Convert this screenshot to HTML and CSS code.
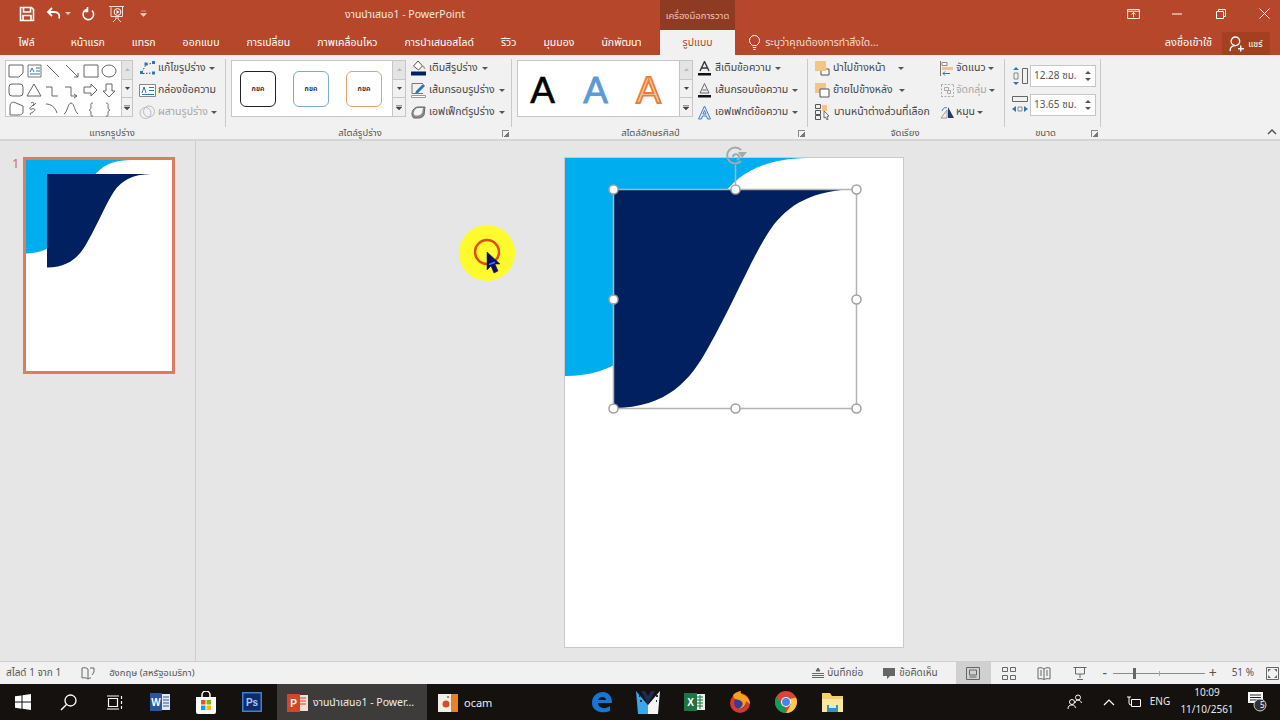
FILE: index.html
```html
<!DOCTYPE html>
<html lang="th">
<head>
<meta charset="utf-8">
<title>งานนำเสนอ1 - PowerPoint</title>
<link rel="stylesheet" href="styles.css">
</head>
<body>
<div class="app">
  <header class="titlebar">
    <div class="qat">
      <svg class="q-save" width="16" height="16" viewBox="0 0 16 16"><path d="M1.500 1.500h11l2 2v11h-13z M4.500 1.500v4.500h7v-4.500 M4 14.500v-5h8v5" fill="none" stroke="#fff" stroke-width="1.600"/></svg>
      <svg class="q-undo" width="16" height="14" viewBox="0 0 16 14"><path d="M6 1L2 5l4 4M2 5h7a4.500 4.500 0 0 1 4 6.500" fill="none" stroke="#fff" stroke-width="1.800"/></svg>
      <svg class="q-drop" width="6" height="4" viewBox="0 0 6 4"><path d="M0 0h6L3 3z" fill="#f1d0c6"/></svg>
      <svg class="q-redo" width="14" height="14" viewBox="0 0 14 14"><path d="M5 2.200A5.300 5.300 0 1 0 10 3.500M5.500 0v4.500H1" fill="none" stroke="#fff" stroke-width="1.600" transform="translate(1 0)"/></svg>
      <svg class="q-show" width="18" height="18" viewBox="0 0 18 18"><path d="M1 1.500h15M3 2v9.500h11.500V2M8 12v2l-3 3M10 12v2l3 3" fill="none" stroke="#f6ded6" stroke-width="1"/><circle cx="9.500" cy="7" r="3.400" fill="none" stroke="#fff"/><path d="M8.500 5l3 2-3 2z" fill="#fff"/></svg>
      <svg class="q-cust" width="7" height="7" viewBox="0 0 7 7"><path d="M1 1h5M.5 3.500h6L3.500 6.500z" fill="#f1d0c6" stroke="#f1d0c6" stroke-width=".6"/></svg>
    </div>
    <div class="doc-title">งานนำเสนอ1 - PowerPoint</div>
    <div class="context-tab">เครื่องมือการวาด</div>
    <div class="win-ctl">
      <div class="win-btn"><svg width="13" height="10" viewBox="0 0 14 11"><path d="M.5.500h13v10H.5zM.5 2.500h13M7 9V4M4.800 6L7 3.800 9.200 6" fill="none" stroke="#fff"/></svg></div>
      <div class="win-btn"><svg width="10" height="2" viewBox="0 0 10 2"><path d="M0 1h10" stroke="#fff"/></svg></div>
      <div class="win-btn"><svg width="10" height="10" viewBox="0 0 10 10"><path d="M.5 2.500h7v7h-7zM2.500 2.500v-2h7v7h-2" fill="none" stroke="#fff"/></svg></div>
      <div class="win-btn"><svg width="11" height="11" viewBox="0 0 11 11"><path d="M.5.500l10 10M10.500.500l-10 10" stroke="#fff"/></svg></div>
    </div>
  </header>

  <nav class="tabs">
    <span class="tab tab-file">ไฟล์</span>
    <span class="tab">หน้าแรก</span>
    <span class="tab">แทรก</span>
    <span class="tab">ออกแบบ</span>
    <span class="tab">การเปลี่ยน</span>
    <span class="tab">ภาพเคลื่อนไหว</span>
    <span class="tab">การนำเสนอสไลด์</span>
    <span class="tab">รีวิว</span>
    <span class="tab">มุมมอง</span>
    <span class="tab">นักพัฒนา</span>
    <span class="tab tab-active">รูปแบบ</span>
    <span class="tell">
      <svg width="11" height="15" viewBox="0 0 11 15"><path d="M3.500 10.500C1 8.500.5 7 .5 5.500a5 5 0 0 1 10 0c0 1.500-.5 3-3 5zM3.800 12.500h3.400M4.500 14.500h2" fill="none" stroke="#fff"/></svg>
      ระบุว่าคุณต้องการทำสิ่งใด...
    </span>
    <span class="signin">ลงชื่อเข้าใช้</span>
    <span class="share">
      <svg width="16" height="16" viewBox="0 0 15 15"><circle cx="6" cy="5" r="4" fill="none" stroke="#fff" stroke-width="1.300"/><path d="M1 14c0-3 2-5 5-5M11 9v5.500M8.500 12h5.500" fill="none" stroke="#fff" stroke-width="1.300"/></svg>
      แชร์
    </span>
  </nav>

  <section class="ribbon">
    <div class="group g-insert">
      <div class="group-body">
        <div class="gallery gal-shapes">
          <svg width="115" height="56" viewBox="0 0 115 56" fill="none" stroke="#666" stroke-width="1">
            <path d="M3 4h14v8l-4 4H3z"/>
            <path d="M22 4h13v12H22z" stroke="#777"/><path d="M24 11l2-4 2 4M30 7h4M30 10h4M24 13h10" stroke="#2e75b6"/>
            <path d="M41 4l12 12"/><path d="M60 4l12 12M72 12v4h-4"/>
            <path d="M78 4h14v12H78z"/><ellipse cx="103" cy="10" rx="7" ry="6"/>
            <rect x="3" y="23" width="14" height="12" rx="3"/>
            <path d="M28 23l7 12H21z"/>
            <path d="M40 26h6v9h6"/><path d="M59 26h6v9h6M68 33l3 2-3 2"/>
            <path d="M78 26h7v-3l6 6-6 6v-3h-7z"/>
            <path d="M100 23h6v7h3l-6 6-6-6h3z"/>
            <path d="M4 45c0-3 3-5 6-3l7 3v6c0 2-2 3-4 3H4z"/>
            <path d="M25 42c3-2 4 1 1 3s-3 4 0 3 4 1 1 3-4 1-2 3M30 42l-3 3"/>
            <path d="M40 43c5 0 9 3 11 9"/>
            <path d="M58 53c3-1 4-11 7-11s4 9 7 11"/>
            <path d="M87 42c-3 0-2 2-2 4s-1 3-2 3c1 0 2 1 2 3s-1 3 2 3"/>
            <path d="M100 42c3 0 2 2 2 4s1 3 2 3c-1 0-2 1-2 3s1 3-2 3"/>
          </svg>
          <div class="scroller">
            <span class="sc sc-dis"><svg width="5" height="3" viewBox="0 0 5 3"><path d="M0 3l2.500-3L5 3z" fill="#bbb"/></svg></span>
            <span class="sc"><svg width="5" height="3" viewBox="0 0 5 3"><path d="M0 0l2.500 3L5 0z" fill="#444"/></svg></span>
            <span class="sc"><svg width="6" height="5" viewBox="0 0 6 5"><path d="M0 .500h6M0 2h6L3 5z" fill="#444" stroke="#444" stroke-width=".5"/></svg></span>
          </div>
        </div>
        <div class="cmds cmds-insert">
          <div class="cmd"><svg width="17" height="15" viewBox="0 0 17 15"><path d="M3 11L7 3.500 14.500 2M4 12.500l10.500-.5" fill="none" stroke="#444" stroke-dasharray="1.500 1.500"/><path d="M1 10h3v3H1zM5.500 1.500h3v3h-3zM13 0h3v3h-3zM13 10.500h3v3h-3z" fill="#2e75b6"/></svg><span>แก้ไขรูปร่าง</span><i class="caret"></i></div>
          <div class="cmd"><svg width="17" height="15" viewBox="0 0 17 15"><path d="M.5 1.500h16v12H.5z" fill="#fff" stroke="#888"/><path d="M3 10l2-6 2 6M10 4.500h5M10 7.500h5M3 11.500h12" fill="none" stroke="#2e75b6"/></svg><span>กล่องข้อความ</span></div>
          <div class="cmd cmd-dis"><svg width="17" height="15" viewBox="0 0 17 15" fill="none" stroke="#bbb"><circle cx="6.500" cy="8" r="5.500"/><circle cx="10" cy="6.500" r="5.500"/></svg><span>ผสานรูปร่าง</span><i class="caret"></i></div>
        </div>
      </div>
      <div class="group-label">แทรกรูปร่าง</div>
    </div>

    <div class="group g-style">
      <div class="group-body">
        <div class="gallery gal-style">
          <div class="swatches">
            <div class="swatch sw-black">กขค</div>
            <div class="swatch sw-blue">กขค</div>
            <div class="swatch sw-orange">กขค</div>
          </div>
          <div class="scroller">
            <span class="sc sc-dis"><svg width="5" height="3" viewBox="0 0 5 3"><path d="M0 3l2.500-3L5 3z" fill="#bbb"/></svg></span>
            <span class="sc"><svg width="5" height="3" viewBox="0 0 5 3"><path d="M0 0l2.500 3L5 0z" fill="#444"/></svg></span>
            <span class="sc"><svg width="6" height="5" viewBox="0 0 6 5"><path d="M0 .500h6M0 2h6L3 5z" fill="#444" stroke="#444" stroke-width=".5"/></svg></span>
          </div>
        </div>
        <div class="cmds cmds-style">
          <div class="cmd"><svg width="15" height="15" viewBox="0 0 15 15"><path d="M7 0l4.500 5-4 4-5-4z" fill="#fff" stroke="#555"/><path d="M12 5c1 1 2 2 1.500 3" fill="none" stroke="#d89b3e" stroke-width="1.500"/><path d="M0 10.500h15v4H0z" fill="#002060"/></svg><span>เติมสีรูปร่าง</span><i class="caret"></i></div>
          <div class="cmd"><svg width="15" height="15" viewBox="0 0 15 15"><path d="M12 .500H1v10h11" fill="none" stroke="#777"/><path d="M5 8l7-7 2 2-7 7-3 1z" fill="#2e75b6"/><path d="M.5 12.500h14v2H.5z" fill="#fff" stroke="#999"/></svg><span>เส้นกรอบรูปร่าง</span><i class="caret"></i></div>
          <div class="cmd"><svg width="15" height="15" viewBox="0 0 15 15"><path d="M1 9c0-4 3-7 6-7h7l-1 8c-1 2-3 3-6 3H3c-1 0-2-2-2-4z" fill="#8c8c8c" stroke="#666"/><path d="M2.500 8.500C3 5 5 3 7.500 3h4.500l-1 5c-1 1.500-2.500 2.500-4.500 2.500H4z" fill="#f4f4f4"/></svg><span>เอฟเฟ็กต์รูปร่าง</span><i class="caret"></i></div>
        </div>
      </div>
      <div class="group-label">สไตล์รูปร่าง<i class="launcher"></i></div>
    </div>

    <div class="group g-word">
      <div class="group-body">
        <div class="gallery gal-word">
          <div class="swatches wa">
            <span class="wa-a wa-black">A</span>
            <span class="wa-a wa-blue">A</span>
            <span class="wa-a wa-orange">A</span>
          </div>
          <div class="scroller">
            <span class="sc sc-dis"><svg width="5" height="3" viewBox="0 0 5 3"><path d="M0 3l2.500-3L5 3z" fill="#bbb"/></svg></span>
            <span class="sc"><svg width="5" height="3" viewBox="0 0 5 3"><path d="M0 0l2.500 3L5 0z" fill="#444"/></svg></span>
            <span class="sc"><svg width="6" height="5" viewBox="0 0 6 5"><path d="M0 .500h6M0 2h6L3 5z" fill="#444" stroke="#444" stroke-width=".5"/></svg></span>
          </div>
        </div>
        <div class="cmds cmds-word">
          <div class="cmd"><svg width="15" height="15" viewBox="0 0 15 15"><path d="M3 10l4.500-9.500L12 10M4.500 7h6" fill="none" stroke="#333" stroke-width="1.400"/><path d="M1 12h13v2.500H1z" fill="#111"/></svg><span>สีเติมข้อความ</span><i class="caret"></i></div>
          <div class="cmd"><svg width="15" height="15" viewBox="0 0 15 15"><path d="M3 10l4.500-9.500L12 10zM5.500 7h4" fill="none" stroke="#666"/><path d="M1 12h13v2.500H1z" fill="#111"/></svg><span>เส้นกรอบข้อความ</span><i class="caret"></i></div>
          <div class="cmd"><svg width="15" height="15" viewBox="0 0 15 15"><path d="M1.500 14L7.500 1l6 13h-3L9.500 11h-4L4.500 14zM6 9h3L7.500 5.500z" fill="#dbe8f6" stroke="#4a7ebb"/></svg><span>เอฟเฟกต์ข้อความ</span><i class="caret"></i></div>
        </div>
      </div>
      <div class="group-label">สไตล์อักษรศิลป์<i class="launcher"></i></div>
    </div>

    <div class="group g-arrange">
      <div class="group-body">
        <div class="cmds cmds-arr1">
          <div class="cmd"><svg width="15" height="15" viewBox="0 0 15 15"><path d="M6 8h8v6H6z" fill="#fff" stroke="#555"/><path d="M0 0h11v10H0z" fill="#f3c583"/></svg><span>นำไปข้างหน้า</span><i class="caret caret-far"></i></div>
          <div class="cmd"><svg width="15" height="15" viewBox="0 0 15 15"><path d="M0 0h11v10H0z" fill="#f3c583"/><path d="M5 6h9v8H5z" fill="#fff" stroke="#555"/></svg><span>ย้ายไปข้างหลัง</span><i class="caret caret-far2"></i></div>
          <div class="cmd"><svg width="16" height="16" viewBox="0 0 16 16"><path d="M.5.500h5v4h-5zM.5 6.500h5v4h-5zM.5 11.500h5v4h-5z" fill="none" stroke="#555"/><path d="M7 1h5v6H7z" fill="#f3c583"/><path d="M9 7l5 5-2 .5 1 3-1 .5-1.500-3L9 14z" fill="#fff" stroke="#555" stroke-width=".8"/></svg><span>บานหน้าต่างส่วนที่เลือก</span></div>
        </div>
        <div class="cmds cmds-arr2">
          <div class="cmd"><svg width="15" height="15" viewBox="0 0 15 15"><path d="M.5 0v15" stroke="#777"/><path d="M2 1.500h5v3H2z" fill="#fff" stroke="#888"/><path d="M2 6h11v3H2z" fill="#f3c583"/><path d="M10 12.500H3M5 10.500l-2 2 2 2" stroke="#2e75b6" fill="none"/></svg><span>จัดแนว</span><i class="caret"></i></div>
          <div class="cmd cmd-dis"><svg width="15" height="15" viewBox="0 0 15 15" fill="none" stroke="#aaa"><path d="M1.500 2v11M13.500 2v11M1 1.500h13M1 13.500h13" stroke-dasharray="2 1.500"/><path d="M4.500 4.500h4v3h-4zM7.500 7.500h3v3h-3z"/></svg><span>จัดกลุ่ม</span><i class="caret"></i></div>
          <div class="cmd"><svg width="15" height="15" viewBox="0 0 15 15"><path d="M1 13L7 5v8z" fill="none" stroke="#999"/><path d="M8 13h6L8 2z" fill="#1f3c62"/><path d="M2 6c1-3 3-4 5-3" stroke="#2e75b6" fill="none"/></svg><span>หมุน</span><i class="caret"></i></div>
        </div>
      </div>
      <div class="group-label">จัดเรียง</div>
    </div>

    <div class="group g-size">
      <div class="group-body">
        <div class="size-rows">
          <div class="size-row">
            <svg width="16" height="18" viewBox="0 0 16 18"><path d="M10.500 1.500h5v15h-5z" fill="none" stroke="#666"/><path d="M4 0L1 3h6zM4 18l-3-3h6z" fill="#2e75b6"/><path d="M2 6h4v6H2z" fill="none" stroke="#888"/></svg>
            <div class="spin"><span>12.28 ซม.</span><b class="arrows"><i class="up"></i><i class="dn"></i></b></div>
          </div>
          <div class="size-row">
            <svg width="16" height="18" viewBox="0 0 16 18"><path d="M.5.500h15v5H.5z" fill="none" stroke="#666"/><path d="M0 13l4-3v6zM16 13l-4-3v6z" fill="#2e75b6"/><path d="M6 11h4v4H6z" fill="none" stroke="#888"/></svg>
            <div class="spin"><span>13.65 ซม.</span><b class="arrows"><i class="up"></i><i class="dn"></i></b></div>
          </div>
        </div>
      </div>
      <div class="group-label">ขนาด<i class="launcher"></i></div>
    </div>

    <div class="collapse"><svg width="10" height="6" viewBox="0 0 10 6"><path d="M1 5l4-4 4 4" fill="none" stroke="#555" stroke-width="1.500"/></svg></div>
  </section>

  <main class="work">
    <aside class="thumbs">
      <span class="thumb-no">1</span>
      <div class="thumb">
        <svg width="146" height="211" viewBox="0 0 146 211">
          <path class="cyan" transform="scale(.4265)" d="M0 0H244C200 1 175 15 157 41C140 66 122 111 95 159C78 190 55 219 0 219Z"/>
          <path class="navy" transform="translate(21 14) scale(.4265)" d="M0 0H244C200 1 175 15 157 41C140 66 122 111 95 159C78 190 55 219 0 219Z"/>
        </svg>
      </div>
    </aside>
    <div class="stage">
      <svg width="1084" height="520" viewBox="196 141 1084 520">
        <rect class="slide" x="564.500" y="157.500" width="339" height="490"/>
        <path class="cyan" transform="translate(565 158)" d="M0 0H242C198 1 173 15 155 41C138 66 120 111 93 159C76 190 53 218 0 218Z"/>
        <path class="navy" transform="translate(613 189)" d="M0 0H244C200 1 175 15 157 41C140 66 122 111 95 159C78 190 55 219 0 219Z"/>
        <rect class="sel" x="613.500" y="189.500" width="243" height="219"/>
        <path class="sel" d="M735.500 165v24"/>
        <g class="rot"><path d="M741 161a8 8 0 1 1 0-11M733 157a3 3 0 1 1 4 3"/></g>
        <path class="rot-tip" d="M738 152l9 0-5 6z"/>
        <circle class="hd" cx="613.500" cy="189.500" r="4.500"/>
        <circle class="hd" cx="735.500" cy="189.500" r="4.500"/>
        <circle class="hd" cx="856.500" cy="189.500" r="4.500"/>
        <circle class="hd" cx="613.500" cy="299.500" r="4.500"/>
        <circle class="hd" cx="856.500" cy="299.500" r="4.500"/>
        <circle class="hd" cx="613.500" cy="408.500" r="4.500"/>
        <circle class="hd" cx="735.500" cy="408.500" r="4.500"/>
        <circle class="hd" cx="856.500" cy="408.500" r="4.500"/>
        <circle class="glow" cx="487" cy="253" r="28"/>
        <circle class="ring" cx="487" cy="252" r="12"/>
        <path class="cursor" d="M487 252v18l4-4 3 7 4-2-3-7h5z"/>
        <path class="cursor-lit" d="M488.500 264l6-2.500 1 1.500-6 2z"/>
      </svg>
    </div>
  </main>

  <footer class="status">
    <span class="st-slide">สไลด์ 1 จาก 1</span>
    <svg class="st-spell" width="14" height="13" viewBox="0 0 14 13"><path d="M7 2C5 .5 3 .5 1 1v10c2-.5 4-.5 6 1 1-.7 2-1 3-1.200M7 2v10M9 1h4v4l-2 3" fill="none" stroke="#666"/></svg>
    <span class="st-lang">อังกฤษ (สหรัฐอเมริกา)</span>
    <span class="st-note"><svg width="12" height="11" viewBox="0 0 12 11"><path d="M6 0L4 3h4zM0 5.500h12M0 7.500h12M0 9.500h12" stroke="#666" fill="#666"/></svg>บันทึกย่อ</span>
    <span class="st-comment"><svg width="12" height="11" viewBox="0 0 12 11"><path d="M0 0h12v8H7l-3 3V8H0z" fill="#666"/></svg>ข้อคิดเห็น</span>
    <span class="view view-on"><svg width="14" height="13" viewBox="0 0 14 13"><path d="M.5.500h13v12H.5zM3.500 3h7v5h-7zM3.500 10h7" fill="none" stroke="#666"/></svg></span>
    <span class="view"><svg width="14" height="13" viewBox="0 0 14 13"><path d="M.5.500h5v4h-5zM8.500.500h5v4h-5zM.5 8.500h5v4h-5zM8.500 8.500h5v4h-5z" fill="none" stroke="#666"/></svg></span>
    <span class="view"><svg width="14" height="13" viewBox="0 0 14 13"><path d="M7 2C5 .5 3 .5 1 1v11c2-.5 4-.5 6 .5 2-1 4-1 6-.5V1c-2-.5-4-.5-6 1zM7 2v10M3 4h2M3 6h2M3 8h2M9 4h2M9 6h2M9 8h2" fill="none" stroke="#666"/></svg></span>
    <span class="view"><svg width="14" height="13" viewBox="0 0 14 13"><path d="M.5.500h13M2.500 1v6h9V1M7 7v4M4 12.500h6" fill="none" stroke="#666"/></svg></span>
    <span class="zoom-minus">-</span>
    <div class="slider"><i class="slider-mid"></i><i class="slider-thumb"></i></div>
    <span class="zoom-plus">+</span>
    <span class="zoom-val">51 %</span>
    <svg class="st-fit" width="13" height="13" viewBox="0 0 13 13"><path d="M.5.500h12v12H.5z" fill="none" stroke="#666"/><path d="M2 2l3 0-3 3zM11 2l-3 0 3 3zM2 11l3 0-3-3zM11 11l-3 0 3-3z" fill="#666"/></svg>
  </footer>

  <footer class="taskbar">
    <div class="tb tb-win"><svg width="16" height="16" viewBox="0 0 16 16"><path d="M0 2.300l6.500-.9v6.200H0zM7.500 1.300L16 0v7.600H7.500zM0 8.500h6.500v6.200L0 13.700zM7.500 8.500H16V16l-8.500-1.200z" fill="#fff"/></svg></div>
    <div class="tb"><svg width="17" height="17" viewBox="0 0 17 17"><circle cx="10.500" cy="6.500" r="5.500" fill="none" stroke="#fff" stroke-width="1.300"/><path d="M6.500 10.500L1 16" stroke="#fff" stroke-width="1.500"/></svg></div>
    <div class="tb"><svg width="17" height="15" viewBox="0 0 17 15"><path d="M2.500 3.500h9v8h-9zM1 1h12M1 14h12M15.500 1v3M15.500 6v3M15.500 11v3" fill="none" stroke="#fff" stroke-width="1.200"/></svg></div>
    <div class="tb"><svg width="21" height="20" viewBox="0 0 21 20"><path d="M6 2h14v16H6z" fill="#dfe8f4"/><path d="M13 5h6M13 8h6M13 11h6M13 14h6" stroke="#2b579a"/><path d="M0 1h12v18H0z" fill="#2b579a"/><text class="tb-letter" x="6" y="14">W</text></svg></div>
    <div class="tb"><svg width="22" height="23" viewBox="0 0 22 23"><path d="M7 6V4a4 4 0 0 1 8 0v2" fill="none" stroke="#fff" stroke-width="1.500"/><path d="M1 6h20v15a2 2 0 0 1-2 2H3a2 2 0 0 1-2-2z" fill="#fff"/><path d="M6 9h4.500v4.500H6z" fill="#f25022"/><path d="M11.500 9H16v4.500h-4.500z" fill="#7fba00"/><path d="M6 14.500h4.500V19H6z" fill="#00a4ef"/><path d="M11.500 14.500H16V19h-4.500z" fill="#ffb900"/></svg></div>
    <div class="tb"><svg width="20" height="20" viewBox="0 0 20 20"><path d="M0 0h20v20H0z" fill="#12296a"/><path d="M.75.750h18.500v18.500H.75z" fill="none" stroke="#3f7fd0" stroke-width="1.500"/><text class="tb-ps" x="10" y="14">Ps</text></svg></div>
    <div class="tb-app tb-active">
      <svg width="21" height="20" viewBox="0 0 21 20"><path d="M7 2h14v16H7z" fill="#f6ded6"/><path d="M13 5h6M13 8h6M13 11h6" stroke="#d24726"/><path d="M0 1h13v18H0z" fill="#d24726"/><text class="tb-letter" x="6.500" y="14">P</text></svg>
      <span>งานนำเสนอ1 - Power...</span>
    </div>
    <div class="tb-app tb-ocam">
      <svg width="20" height="20" viewBox="0 0 20 20"><path d="M0 1h20v18H0z" fill="#f2efe9"/><path d="M13 1h7v18h-7z" fill="#e8802a"/><circle cx="8" cy="11" r="3.500" fill="#d2502a"/><circle cx="10" cy="4" r="1" fill="#d2502a"/></svg>
      <span>ocam</span>
    </div>
    <div class="tb"><svg width="22" height="22" viewBox="0 0 22 22"><path d="M1 12C1 5 6 1 12 1c6 0 9 5 9 11H7c0 5 7 7 12 3v5c-7 3-18 1-18-8zm6-3h8c0-4-7-4-8 0z" fill="#1776d2"/></svg></div>
    <div class="tb"><svg width="24" height="23" viewBox="0 0 24 23"><path d="M0 0l12 14v9H2z" fill="#38a9e8"/><path d="M24 0L12 14v9h10z" fill="#f2f4f6"/><path d="M5 0h4l3 5 3-5h4l-7 13z" fill="#1b2d55"/><path d="M20 5h2M20 10h1M3 5h1.500M4 10h2" stroke="#1b2d55" stroke-width="2"/></svg></div>
    <div class="tb"><svg width="21" height="20" viewBox="0 0 21 20"><path d="M6 2h15v16H6z" fill="#e6f1ea"/><path d="M13 5h6M13 8h6M13 11h6M13 14h6M16 3v14" stroke="#217346"/><path d="M0 1h13v18H0z" fill="#217346"/><text class="tb-letter" x="6.500" y="14">X</text></svg></div>
    <div class="tb"><svg width="22" height="22" viewBox="0 0 22 22"><circle cx="11" cy="12" r="10" fill="#d8392b"/><circle cx="11" cy="12" r="6" fill="#3a3a9e"/><path d="M4 4c3-3 6-4 8-4-1 2 0 3 3 4 4 2 6 6 6 9l-4-3c0 4-3 8-8 8 5-2 6-6 3-8-2-2-6-1-7-3z" fill="#f7a21b"/></svg></div>
    <div class="tb"><svg width="22" height="22" viewBox="0 0 22 22"><circle cx="11" cy="11" r="11" fill="#db4437"/><path d="M11 22A11 11 0 0 1 1.500 5.500L7 14l4 3 z" fill="#0f9d58"/><path d="M21 6.500A11 11 0 0 1 11 22l5-9-1-5z" fill="#ffcd40"/><circle cx="11" cy="11" r="5" fill="#fff"/><circle cx="11" cy="11" r="4" fill="#4285f4"/></svg></div>
    <div class="tb"><svg width="21" height="19" viewBox="0 0 21 19"><path d="M0 0h8l2 3h11v16H0z" fill="#f3d06b"/><path d="M0 6h21v13H0z" fill="#fbe7a0"/><path d="M5 12h11v7H5z" fill="#3a8fc8"/><path d="M7 12h7v3H7z" fill="#cfeaf8"/></svg></div>
    <div class="tray">
      <span class="tr tr-people"><svg width="16" height="16" viewBox="0 0 16 16"><circle cx="5" cy="8" r="2.500" fill="none" stroke="#fff"/><path d="M1 15c0-3 1.500-4 4-4s3 1 3.500 3" fill="none" stroke="#fff"/><circle cx="11" cy="3.500" r="2.500" fill="none" stroke="#fff"/><path d="M8 9c.5-2 1.500-3 3-3s3 1 3.500 3" fill="none" stroke="#fff"/></svg></span>
      <span class="tr tr-chev"><svg width="12" height="7" viewBox="0 0 12 7"><path d="M1 6l5-5 5 5" fill="none" stroke="#fff" stroke-width="1.200"/></svg></span>
      <span class="tr tr-net"><svg width="15" height="14" viewBox="0 0 15 14"><path d="M5.500 4.500h9v7h-9z" fill="none" stroke="#fff"/><path d="M3 2v6M1 2h4M3 8a2 2 0 0 0 2 2" fill="none" stroke="#fff"/></svg></span>
      <span class="tr tr-eng">ENG</span>
      <span class="tr tr-time"><span>10:09</span><span>11/10/2561</span></span>
      <span class="tr tr-notif"><svg width="20" height="20" viewBox="0 0 20 20"><path d="M1 0h15v11h-5l-3 3v-3H1z" fill="#fff"/><path d="M3 3h11M3 5.500h11M3 8h11" stroke="#222"/><circle cx="13" cy="13" r="6" fill="#333" stroke="#ccc"/></svg><b>5</b></span>
    </div>
  </footer>
</div>
</body>
</html>
```
FILE: styles.css
```css
* { box-sizing: border-box; }
html, body { margin: 0; padding: 0; }
body { font-family: "Noto Sans Thai", "Leelawadee UI", Tahoma, "Noto Sans", "DejaVu Sans", sans-serif; font-size: 10px; color: #444; overflow: hidden; }
.app { width: 1280px; height: 720px; display: flex; flex-direction: column; background: #e6e6e6; overflow: hidden; }
svg { display: block; flex: none; }
i { font-style: normal; }

.titlebar { height: 30px; flex: none; background: #b7472a; color: #fff; display: flex; }
.qat { width: 345px; display: flex; align-items: center; padding: 0 0 3px 19px; }
.q-undo { margin-left: 11px; }
.q-drop { margin-left: 3px; }
.q-redo { margin-left: 10px; }
.q-show { margin-left: 13px; }
.q-cust { margin-left: 14px; }
.doc-title { width: 315px; line-height: 30px; font-size: 10.500px; color: #f8e6e0; }
.context-tab { width: 75px; background: #8f3a22; color: #ecc7bb; font-size: 9.500px; text-align: center; line-height: 32px; }
.win-ctl { margin-left: auto; display: flex; gap: 29.500px; padding: 0 9px 3px 0; }
.win-btn { width: 14px; display: flex; align-items: center; justify-content: center; }

.tabs { height: 25px; flex: none; background: #b7472a; color: #fff; display: flex; align-items: stretch; font-size: 10.500px; line-height: 26px; }
.tab { padding: 0 13.500px; }
.tab-file { margin-left: 5px; margin-right: 9px; }
.tab-active { background: #f1f1f1; color: #b7472a; width: 75px; padding: 0; text-align: center; margin-left: 5px; }
.tell { display: flex; align-items: center; gap: 5px; margin-left: 14px; color: #f6dcd3; font-size: 10.400px; }
.signin { margin-left: auto; font-size: 11px; }
.share { width: 48px; margin: 2px 10px 0 10px; background: #a5401f; display: flex; align-items: center; justify-content: center; gap: 3px; font-size: 9px; }

.ribbon { height: 86px; flex: none; background: #f1f1f1; border-bottom: 2px solid #d5d5d5; display: flex; }
.group { display: flex; flex-direction: column; padding-top: 1px; position: relative; }
.group::after { content: ""; position: absolute; right: 0; top: 4px; bottom: 12px; width: 1px; background: #c9c9c9; }
.g-insert { width: 226px; padding-left: 5px; }
.g-style { width: 286px; padding-left: 5px; }
.g-word { width: 296px; padding-left: 5px; }
.g-arrange { width: 197px; padding-left: 7px; }
.g-size { width: 96px; padding-left: 5px; }
.group-body { height: 70px; display: flex; }
.group-label { height: 13px; text-align: center; font-size: 9.500px; line-height: 14px; color: #555; position: relative; }
.g-insert .group-label { padding-right: 7px; }
.g-style .group-label { padding-right: 23px; }
.g-word .group-label { padding-right: 24px; }
.g-arrange .group-label { padding-right: 10px; }
.g-size .group-label { padding-right: 20px; }
.launcher { position: absolute; right: 3px; top: 4px; width: 7px; height: 7px; border-left: 1px solid #888; border-top: 1px solid #888; background: linear-gradient(135deg, transparent 55%, #777 55%); }

.gallery { height: 57px; margin-top: 4px; background: #fff; border: 1px solid #c6c6c6; display: flex; }
.gal-shapes { width: 128px; }
.gal-style { width: 175px; }
.gal-word { width: 176px; }
.gallery > svg { margin-right: auto; }
.scroller { width: 13px; margin-left: auto; display: flex; flex-direction: column; border-left: 1px solid #c6c6c6; background: #f1f1f1; }
.sc { flex: 1; display: flex; align-items: center; justify-content: center; border-bottom: 1px solid #c6c6c6; }
.sc:last-child { border-bottom: 0; }
.sc-dis { background: #e4e4e4; }
.swatches { flex: 1; display: flex; align-items: center; padding-left: 8px; gap: 17px; }
.swatch { width: 36px; height: 36px; border-radius: 6px; border: 1.500px solid #222; font-size: 7px; font-weight: 600; color: #222; display: flex; align-items: center; justify-content: center; background: #fff; }
.sw-blue { border-color: #7fa8cf; }
.sw-orange { border-color: #e0a270; }
.wa { padding-left: 12px; gap: 28px; }
.wa-a { font-family: "Liberation Sans", Arial, sans-serif; font-size: 37px; line-height: 38px; margin-top: 5px; width: 25px; text-align: center; }
.wa-black { color: #000; -webkit-text-stroke: .6px #000; }
.wa-blue { color: #5b9bd5; -webkit-text-stroke: .8px #5b9bd5; }
.wa-orange { color: #f8cba5; -webkit-text-stroke: 1.800px #ed7d31; }

.cmds { display: flex; flex-direction: column; padding-top: 1px; }
.cmd { height: 22px; display: flex; align-items: center; gap: 3px; font-size: 10.500px; color: #444; white-space: nowrap; }
.cmd-dis { color: #a8a8a8; }
.caret { width: 0; height: 0; border: 3px solid transparent; border-top-color: #555; border-bottom: 0; margin-left: 1px; }
.caret-far { margin-left: 9px; }
.caret-far2 { margin-left: 3px; }
.cmds-insert { margin-left: 6px; }
.cmds-insert .cmd { gap: 2px; }
.cmds-style { margin-left: 5px; }
.cmds-word { margin-left: 4px; }
.cmds-arr1 { width: 125px; }
.cmds-arr2 .cmd { gap: 1px; }
.size-rows { display: flex; flex-direction: column; gap: 7px; padding: 9px 0 0 1px; }
.size-row { display: flex; align-items: center; gap: 2px; margin-left: 1px; }
.spin { width: 66px; height: 22px; background: #fff; border: 1px solid #c6c6c6; display: flex; align-items: center; padding: 0 4px 0 3px; font-size: 10px; color: #555; white-space: nowrap; }
.arrows { margin-left: auto; display: flex; flex-direction: column; gap: 4px; }
.up { width: 0; height: 0; border: 3px solid transparent; border-bottom-color: #555; border-top: 0; }
.dn { width: 0; height: 0; border: 3px solid transparent; border-top-color: #555; border-bottom: 0; }
.collapse { margin-left: auto; align-self: flex-end; padding: 0 3px 4px 0; }

.work { flex: 1; display: flex; min-height: 0; border-bottom: 1px solid #cfcfcf; }
.thumbs { width: 196px; flex: none; border-right: 1px solid #cfcfcf; display: flex; align-items: flex-start; padding: 16px 0 0 12px; }
.thumb-no { width: 11px; font-size: 13px; line-height: 14px; color: #d24726; opacity: .75; }
.thumb { width: 152px; height: 217px; border: 3px solid #e07b5f; background: #fff; }
.stage { flex: 1; min-width: 0; }
.slide { fill: #fff; stroke: #c9c9c9; }
.cyan { fill: #00aeef; }
.navy { fill: #002060; }
.sel { fill: none; stroke: #b3b3b3; stroke-width: 1.500; }
.hd { fill: #fff; stroke: #a0a0a0; stroke-width: 1.500; }
.rot path { fill: none; stroke: #a8a8a8; stroke-width: 2; }
.rot-tip { fill: #a8a8a8; }
.glow { fill: #fdfb2e; }
.ring { fill: none; stroke: #e24a05; stroke-width: 2.500; }
.cursor { fill: #0a0a6e; stroke: #0a0a3c; stroke-width: .5; }
.cursor-lit { fill: #2f8cff; }

.status { height: 22px; flex: none; background: #f1f1f1; display: flex; align-items: center; font-size: 10px; color: #555; white-space: nowrap; padding-left: 6px; }
.st-spell { margin-left: 20px; }
.st-lang { margin-left: 14px; font-size: 9.500px; }
.st-note { margin-left: auto; display: flex; align-items: center; gap: 3px; }
.st-comment { margin-left: 20px; display: flex; align-items: center; gap: 4px; margin-right: 18px; }
.view { width: 35.500px; height: 22px; display: flex; align-items: center; justify-content: center; }
.view-on { background: #d0d0d0; }
.zoom-minus { margin-left: 2px; width: 10px; font-size: 14px; text-align: center; }
.slider { width: 92px; height: 1px; background: #8a8a8a; margin: 0 3px; position: relative; }
.slider-mid { position: absolute; left: 46px; top: -2px; width: 1px; height: 5px; background: #aaa; }
.slider-thumb { position: absolute; left: 20px; top: -5px; width: 3px; height: 11px; background: #666; }
.zoom-plus { width: 10px; font-size: 14px; text-align: center; }
.zoom-val { margin-left: 14px; font-size: 10px; }
.st-fit { margin: 0 1px 0 12px; }

.taskbar { height: 36px; flex: none; background: #14110f; display: flex; align-items: stretch; color: #eee; font-size: 11px; }
.tb { width: 46px; display: flex; align-items: center; justify-content: center; }
.tb-win { width: 45px; }
.tb-letter { font: bold 10px "Liberation Sans", sans-serif; fill: #fff; text-anchor: middle; }
.tb-ps { font: bold 10px "Liberation Sans", sans-serif; fill: #9fd0fb; text-anchor: middle; }
.tb-app { display: flex; align-items: center; gap: 5px; width: 150px; padding: 2px 0 0 10px; white-space: nowrap; }
.tb-active { background: #3d3c3a; margin-left: 2px; font-size: 10.500px; }
.tb-ocam { width: 152px; padding-left: 11px; gap: 6px; }
.tray { margin-left: auto; display: flex; align-items: center; font-size: 11px; color: #e8e8e8; }
.tr { display: flex; justify-content: center; align-items: center; }
.tr-people { width: 34px; }
.tr-chev { width: 34px; }
.tr-net { width: 14px; }
.tr-eng { width: 40px; font-size: 10px; }
.tr-time { width: 54px; flex-direction: column; font-size: 10px; line-height: 17px; }
.tr-notif { width: 46px; position: relative; }
.tr-notif b { position: absolute; left: 26px; top: 8px; font-size: 8px; font-weight: 400; color: #fff; }
```
